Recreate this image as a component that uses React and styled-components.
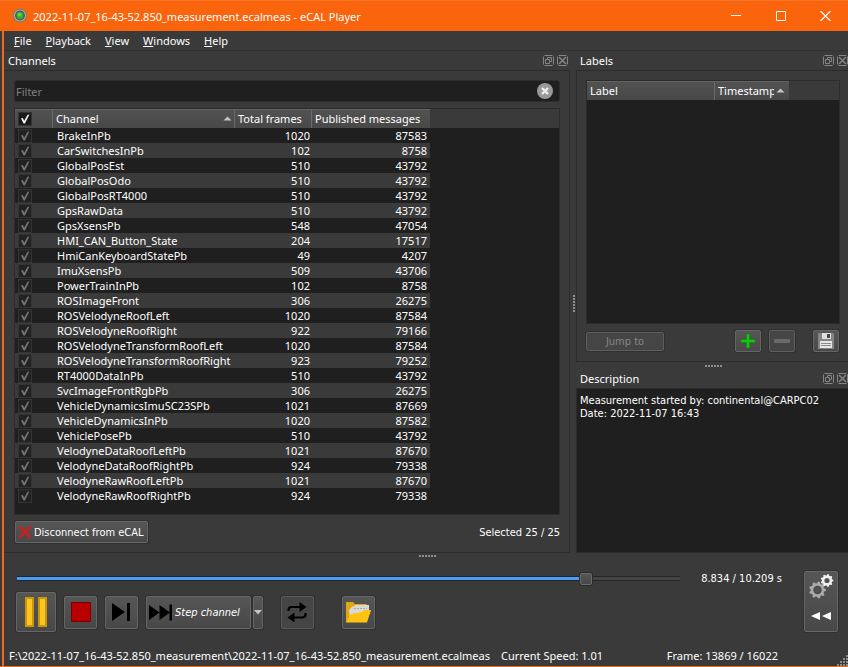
import React, { useState } from 'react';
import styled, { createGlobalStyle, css } from 'styled-components';

const UI = '"Noto Sans", "Open Sans", sans-serif';
const SMALL = '"DejaVu Sans Condensed", "DejaVu Sans", sans-serif';
const PANEL = '#3a3a3a';
const BASE = '#1f1f1f';
const LINE = '#2c2c2c';

const GlobalStyle = createGlobalStyle`
  *, *::before, *::after { box-sizing: border-box; }
  body { margin: 0; background: ${PANEL}; color: #fff; font: 11px/15px ${UI}; }
  button, input { font: inherit; color: inherit; margin: 0; padding: 0; }
  svg { display: block; flex: none; }
`;

const Window = styled.div`
  display: flex;
  flex-direction: column;
  min-height: 100vh;
  background: ${PANEL};
  border-bottom: 1px solid #f0691f;
`;
const TitleBar = styled.header`
  display: flex;
  align-items: center;
  height: 31px;
  padding-left: 12px;
  background: #f9640d;
  border-top: 1px solid #f87526;
`;
const Title = styled.h1`
  flex: 1;
  margin: 0 0 0 5px;
  font-size: 11px;
  font-weight: 400;
  white-space: nowrap;
`;
const CaptionButton = styled.button`
  display: grid;
  place-items: center;
  width: 45px;
  height: 30px;
  border: 0;
  background: none;
`;
const Body = styled.div`
  flex: 1;
  display: flex;
  flex-direction: column;
  margin-left: 2px;
  border-left: 2px solid #f0691f;
`;
const MenuBar = styled.nav`
  display: flex;
  height: 20px;
  padding-left: 3px;
  border-bottom: 1px solid #323232;
`;
const MenuItem = styled.button`
  padding: 0 7px;
  border: 0;
  background: none;
  line-height: 20px;
`;
const Docks = styled.main`
  flex: 1;
  display: flex;
`;
const LeftDock = styled.section`
  flex: 1;
  display: flex;
  flex-direction: column;
  min-width: 0;
`;
const RightColumn = styled.div`
  flex: none;
  width: 272px;
  display: flex;
  flex-direction: column;
`;
const Dock = styled.section`
  display: flex;
  flex-direction: column;
`;
const DescriptionDock = styled(Dock)`
  flex: 1;
`;
const DockTitle = styled.div`
  display: flex;
  align-items: center;
  gap: 3px;
  height: 19px;
  padding: 0 2px 0 4px;
  ${(p) => p.$flush && css`padding-right: 0;`}
`;
const DockName = styled.h2`
  flex: 1;
  margin: 0;
  font-size: 11px;
  font-weight: 400;
`;
const DockButton = styled.button`
  width: 11px;
  height: 11px;
  border: 0;
  background: none;
`;
const Frame = styled.div`
  flex: 1;
  display: flex;
  flex-direction: column;
  border: 1px solid ${LINE};
  padding: 9px;
  ${(p) => p.$left && css`border-left: 0; padding-left: 10px;`}
  ${(p) => p.$right && css`border-right: 0; padding-right: 8px;`}
`;
const VerticalSplit = styled.div`
  display: flex;
  align-items: center;
  justify-content: flex-end;
  width: 6px;
  padding-top: 3px;
`;
const HorizontalSplit = styled.div`
  display: flex;
  align-items: center;
  justify-content: center;
  height: 7px;
  padding-left: 4px;
  ${(p) => p.$low && css`align-items: flex-end; padding-bottom: 1px;`}
`;

const FilterBox = styled.label`
  display: flex;
  align-items: center;
  height: 22px;
  padding: 0 6px 0 1px;
  background: ${BASE};
  border: 1px solid ${LINE};
  border-radius: 3px;
`;
const FilterInput = styled.input`
  flex: 1;
  height: 20px;
  border: 0;
  outline: 0;
  background: none;
  &::placeholder { color: #808080; opacity: 1; }
`;
const ClearButton = styled.button`
  width: 16px;
  height: 16px;
  border: 0;
  background: none;
`;
const TableView = styled.div`
  flex: 1;
  background: ${BASE};
  border: 1px solid ${LINE};
`;
const ChannelView = styled(TableView)`
  margin-top: 6px;
`;
const LabelView = styled(TableView)`
  min-height: 244px;
`;
const HeaderStrip = styled.div`
  height: 19px;
  background: ${PANEL};
`;
const Table = styled.table`
  table-layout: fixed;
  width: ${(p) => p.$width}px;
  border-collapse: separate;
  border-spacing: 0;
`;
const HeadCell = styled.th`
  height: 19px;
  padding: 0 0 0 3px;
  font-weight: 400;
  line-height: 18px;
  text-align: left;
  white-space: nowrap;
  background: linear-gradient(#525252, #484848);
  border-top: 1px solid #626262;
  border-right: 1px solid #6a6a6a;
  &:last-child { border-right: 0; }
`;
const HeadContent = styled.div`
  display: flex;
  align-items: center;
  gap: 2px;
  padding-right: ${(p) => p.$pad}px;
  svg { margin-bottom: 2px; }
`;
const HeadText = styled.span`
  flex: 1;
  min-width: 0;
  overflow: hidden;
`;
const Row = styled.tr`
  background: ${BASE};
  &:nth-child(even) { background: ${PANEL}; }
`;
const Cell = styled.td`
  height: 15px;
  padding: 0 0 0 4px;
  line-height: 15px;
  white-space: nowrap;
  ${(p) => p.$num && css`text-align: right; padding-right: ${p.$num}px;`}
`;
const CheckCell = styled(Cell)`
  padding-left: 3px;
`;
const Check = styled.span`
  display: grid;
  width: 14px;
  height: 14px;
  > * { grid-area: 1 / 1; }
  svg { place-self: center; pointer-events: none; }
`;
const CheckInput = styled.input`
  appearance: none;
  width: 14px;
  height: 14px;
  background: ${(p) => (p.$bright ? '#191919' : '#222')};
  border: 1px solid #343434;
`;
const ToolRow = styled.div`
  display: flex;
  align-items: center;
  gap: 8px;
  height: 22px;
  margin-top: 6px;
  padding-right: 1px;
`;
const SplitRow = styled(ToolRow)`
  justify-content: space-between;
  padding-right: 0;
`;
const Spacer = styled.span`
  flex: 1;
`;
const Small = styled.span`
  font-family: ${SMALL};
  white-space: nowrap;
`;
const Button = styled.button`
  display: flex;
  align-items: center;
  justify-content: center;
  gap: 2px;
  width: ${(p) => (p.$w ? p.$w + 'px' : 'auto')};
  height: ${(p) => p.$h}px;
  border: 1px solid #666;
  border-radius: 2px;
  background: linear-gradient(#565656, #484848);
  box-shadow: 0 0 0 1px #303030;
  font-family: ${SMALL};
  white-space: nowrap;
  ${(p) => p.$flat && css`background: #454545; border-color: #5a5a5a;`}
  &:disabled { color: #858585; border-color: #5e5e5e; background: #454545; }
`;
const DisconnectButton = styled(Button)`
  padding: 0 3px 0 2px;
  margin-left: 1px;
`;
const StepButton = styled(Button)`
  gap: 3px;
  padding: 0 10px 0 2px;
  font-style: italic;
`;
const SaveSlot = styled.div`
  margin-left: 10px;
`;
const Notes = styled.div`
  flex: 1;
  padding: 5px 3px;
  background: ${BASE};
  border: 1px solid ${LINE};
  border-right: 0;
  font-family: ${SMALL};
  line-height: 13px;
`;

const Controls = styled.section`
  display: flex;
  gap: 22px;
  padding: 11px 10px 0 12px;
`;
const Transport = styled.div`
  flex: 1;
`;
const SliderRow = styled.div`
  display: flex;
  align-items: center;
  gap: 21px;
  height: 15px;
  padding-left: 1px;
`;
const Slider = styled.input`
  appearance: none;
  flex: 1;
  height: 13px;
  background:
    linear-gradient(#4a9df5, #4a9df5) left center / ${(p) => p.$fill}% 3px no-repeat,
    linear-gradient(#454545, #454545) center / 100% 3px no-repeat,
    linear-gradient(#262626, #262626) center / 100% 5px no-repeat;
  border-radius: 2px;
  &::-webkit-slider-thumb {
    appearance: none;
    width: 12px;
    height: 12px;
    border: 1px solid #6a6a6a;
    border-radius: 2px;
    background: linear-gradient(#565656, #484848);
    box-shadow: 0 0 0 1px #2c2c2c;
  }
`;
const Buttons = styled.div`
  display: flex;
  align-items: center;
  gap: 8px;
  margin-top: 6px;
`;
const SplitButton = styled.div`
  display: flex;
  gap: 2px;
  margin-right: 10px;
`;
const LoopSlot = styled.div`
  margin-right: 20px;
`;
const SpeedButton = styled(Button)`
  flex-direction: column;
  justify-content: space-between;
  padding: 2px 0 11px;
`;
const StatusBar = styled.footer`
  display: flex;
  align-items: center;
  height: 21px;
  margin-top: 13px;
  padding-left: 5px;
  white-space: nowrap;
`;
const Path = styled.span`
  flex: 0 1 482px;
  overflow: hidden;
`;
const Speed = styled.span`
  flex: 1;
  padding-left: 10px;
`;
const FrameCount = styled.span`
  padding-right: 59px;
`;
const GripSlot = styled.span`
  align-self: flex-end;
`;

const menus = ['File', 'Playback', 'View', 'Windows', 'Help'];

const channels = [
  ['BrakeInPb', 1020, 87583],
  ['CarSwitchesInPb', 102, 8758],
  ['GlobalPosEst', 510, 43792],
  ['GlobalPosOdo', 510, 43792],
  ['GlobalPosRT4000', 510, 43792],
  ['GpsRawData', 510, 43792],
  ['GpsXsensPb', 548, 47054],
  ['HMI_CAN_Button_State', 204, 17517],
  ['HmiCanKeyboardStatePb', 49, 4207],
  ['ImuXsensPb', 509, 43706],
  ['PowerTrainInPb', 102, 8758],
  ['ROSImageFront', 306, 26275],
  ['ROSVelodyneRoofLeft', 1020, 87584],
  ['ROSVelodyneRoofRight', 922, 79166],
  ['ROSVelodyneTransformRoofLeft', 1020, 87584],
  ['ROSVelodyneTransformRoofRight', 923, 79252],
  ['RT4000DataInPb', 510, 43792],
  ['SvcImageFrontRgbPb', 306, 26275],
  ['VehicleDynamicsImuSC23SPb', 1021, 87669],
  ['VehicleDynamicsInPb', 1020, 87582],
  ['VehiclePosePb', 510, 43792],
  ['VelodyneDataRoofLeftPb', 1021, 87670],
  ['VelodyneDataRoofRightPb', 924, 79338],
  ['VelodyneRawRoofLeftPb', 1021, 87670],
  ['VelodyneRawRoofRightPb', 924, 79338],
];

const CheckBox = ({ label, bright }) => (
  <Check>
    <CheckInput type="checkbox" defaultChecked aria-label={label} $bright={bright} />
    <svg width="10" height="10" viewBox="0 0 10 10" fill={bright ? '#f2f2f2' : '#767676'}>
      <path d="M1 4.6 2.8 4 4.2 6.8 7.6.8 9.4.4 4.9 9.4H3.6Z" />
    </svg>
  </Check>
);
const SortArrow = () => (
  <svg width="9" height="5" viewBox="0 0 9 5"><path d="M.5 4.5 4.5.5l4 4Z" fill="#c4c4c4" /></svg>
);
const Dots = ({ vertical }) => (
  <svg width={vertical ? 3 : 18} height={vertical ? 18 : 3}>
    {[0, 3, 6, 9, 12, 15].map((n) => (
      <rect key={n} x={vertical ? 0 : n} y={vertical ? n : 0} width="2" height="2" fill="#8d8d8d" />
    ))}
  </svg>
);
const FloatIcon = () => (
  <svg width="11" height="11" viewBox="0 0 11 11" fill="none" stroke="#858585">
    <path d="M1.5.5h8M1.5 10.5h8M.5 1.5v8M10.5 1.5v8" />
    <path d="M4.5 4V2.5h4v4H7M2.5 4.5h4v4h-4z" />
  </svg>
);
const CrossIcon = () => (
  <svg width="11" height="11" viewBox="0 0 11 11" fill="none" stroke="#858585">
    <path d="M1.5.5h8M1.5 10.5h8M.5 1.5v8M10.5 1.5v8" />
    <path d="m2 2 7 7M9 2 2 9" strokeWidth="1.5" />
  </svg>
);
const DockHeader = ({ name, flush }) => (
  <DockTitle $flush={flush}>
    <DockName>{name}</DockName>
    <DockButton aria-label={`Float ${name}`}><FloatIcon /></DockButton>
    <DockButton aria-label={`Close ${name}`}><CrossIcon /></DockButton>
  </DockTitle>
);
const AppIcon = () => (
  <svg width="16" height="16" viewBox="0 0 16 16">
    <circle cx="8" cy="7.500" r="6.500" fill="#a9b0ac" stroke="#7a7868" />
    <circle cx="8" cy="7.500" r="4.200" fill="#2fb325" stroke="#4b5a52" strokeWidth="1.400" />
    <circle cx="7.500" cy="6.500" r="2" fill="#5bd44c" />
  </svg>
);

const gear = (cx, cy, r, teeth) => {
  const pts = [];
  for (let i = 0; i < teeth * 4; i += 1) {
    const a = ((i - 0.5) / (teeth * 4)) * Math.PI * 2;
    const rad = i % 4 < 2 ? r : r * 0.8;
    pts.push(`${(cx + rad * Math.cos(a)).toFixed(2)},${(cy + rad * Math.sin(a)).toFixed(2)}`);
  }
  return `M${pts.join('L')}Z`;
};
const hole = (cx, cy, r) => `M${cx - r},${cy}a${r},${r} 0 1 0 ${2 * r},0a${r},${r} 0 1 0 ${-2 * r},0Z`;
const GearsIcon = () => (
  <svg width="26" height="26" viewBox="0 0 26 26" fillRule="evenodd">
    <path d={gear(9.5, 16, 8.5, 9) + hole(9.5, 16, 3.6)} fill="#a9a9a9" />
    <path d={hole(9.5, 16, 4.2) + hole(9.5, 16, 2.8)} fill="#4a4a4a" />
    <path d={gear(19, 6.5, 6.4, 9) + hole(19, 6.5, 2.6)} fill="#f1f3f1" />
  </svg>
);

function ChannelTable() {
  return (
    <ChannelView>
      <HeaderStrip>
        <Table $width={415}>
          <colgroup>
            <col width="38" /><col width="182" /><col width="77" /><col width="118" />
          </colgroup>
          <thead>
            <tr>
              <HeadCell><CheckBox label="Select all channels" bright /></HeadCell>
              <HeadCell>
                <HeadContent $pad={2}><HeadText>Channel</HeadText><SortArrow /></HeadContent>
              </HeadCell>
              <HeadCell>Total frames</HeadCell>
              <HeadCell>Published messages</HeadCell>
            </tr>
          </thead>
          <tbody>
            {channels.map(([name, frames, messages]) => (
              <Row key={name}>
                <CheckCell><CheckBox label={name} /></CheckCell>
                <Cell>{name}</Cell>
                <Cell $num={2}>{frames}</Cell>
                <Cell $num={3}>{messages}</Cell>
              </Row>
            ))}
          </tbody>
        </Table>
      </HeaderStrip>
    </ChannelView>
  );
}

function LabelTable() {
  return (
    <LabelView>
      <HeaderStrip>
        <Table $width={202}>
          <colgroup><col width="128" /><col width="74" /></colgroup>
          <thead>
            <tr>
              <HeadCell>Label</HeadCell>
              <HeadCell>
                <HeadContent $pad={4}><HeadText>Timestamp</HeadText><SortArrow /></HeadContent>
              </HeadCell>
            </tr>
          </thead>
        </Table>
      </HeaderStrip>
    </LabelView>
  );
}

export default function App() {
  const [position, setPosition] = useState(8834);
  return (
    <Window>
      <GlobalStyle />
      <TitleBar>
        <AppIcon />
        <Title>2022-11-07_16-43-52.850_measurement.ecalmeas - eCAL Player</Title>
        <CaptionButton aria-label="Minimize">
          <svg width="10" height="10"><path d="M0 4.500h10" stroke="#fff" /></svg>
        </CaptionButton>
        <CaptionButton aria-label="Maximize">
          <svg width="10" height="10"><path d="M.5.5h9v9h-9z" stroke="#fff" fill="none" /></svg>
        </CaptionButton>
        <CaptionButton aria-label="Close">
          <svg width="11" height="10"><path d="m.5 0 10 10M10.500 0l-10 10" stroke="#fff" strokeWidth="1.200" /></svg>
        </CaptionButton>
      </TitleBar>
      <Body>
        <MenuBar>
          {menus.map((m) => (
            <MenuItem key={m}><u>{m[0]}</u>{m.slice(1)}</MenuItem>
          ))}
        </MenuBar>
        <Docks>
          <LeftDock>
            <DockHeader name="Channels" />
            <Frame $left>
              <FilterBox>
                <FilterInput placeholder="Filter" aria-label="Filter" />
                <ClearButton aria-label="Clear filter">
                  <svg width="16" height="16" viewBox="0 0 16 16">
                    <circle cx="8" cy="8" r="8" fill="#999" />
                    <path d="m5 5 6 6M11 5l-6 6" stroke="#eee" strokeWidth="2.400" />
                  </svg>
                </ClearButton>
              </FilterBox>
              <ChannelTable />
              <SplitRow>
                <DisconnectButton $h={22}>
                  <svg width="14" height="14" viewBox="0 0 14 14">
                    <path d="m1.500 1.500 11 11M12.500 1.500l-11 11" stroke="#c32222" strokeWidth="3" />
                  </svg>
                  Disconnect from eCAL
                </DisconnectButton>
                <Small>Selected 25 / 25</Small>
              </SplitRow>
            </Frame>
          </LeftDock>
          <VerticalSplit><Dots vertical /></VerticalSplit>
          <RightColumn>
            <Dock>
              <DockHeader name="Labels" flush />
              <Frame $right>
                <LabelTable />
                <ToolRow>
                  <Button $w={78} $h={19} disabled>Jump to</Button>
                  <Spacer />
                  <Button $w={26} $h={22} aria-label="Add label">
                    <svg width="16" height="16" viewBox="0 0 16 16">
                      <path d="M6.500 1h3v5.500H15v3H9.500V15h-3V9.500H1v-3h5.500Z" fill="#12c80c" stroke="#0b8a0b" strokeWidth=".6" />
                    </svg>
                  </Button>
                  <Button $w={26} $h={22} disabled aria-label="Remove label">
                    <svg width="16" height="4"><rect width="16" height="4" rx="1" fill="#696969" /></svg>
                  </Button>
                  <SaveSlot>
                    <Button $w={26} $h={22} aria-label="Save labels">
                      <svg width="16" height="16" viewBox="0 0 16 16">
                        <path d="M0 0h15l1 1v15H0Z" fill="#858585" />
                        <path d="M4 0h9v6H4Z" fill="#dedede" />
                        <path d="M9 1h3v4H9Z" fill="#4a4a4a" />
                        <path d="M2 8h12v7H2Z" fill="#e6e6e6" />
                        <path d="M3 10.500h10M3 12.500h10" stroke="#8a8a8a" />
                      </svg>
                    </Button>
                  </SaveSlot>
                </ToolRow>
              </Frame>
            </Dock>
            <HorizontalSplit $low><Dots /></HorizontalSplit>
            <DescriptionDock>
              <DockHeader name="Description" flush />
              <Notes>
                Measurement started by: continental@CARPC02<br />
                Date: 2022-11-07 16:43
              </Notes>
            </DescriptionDock>
          </RightColumn>
        </Docks>
        <HorizontalSplit><Dots /></HorizontalSplit>
        <Controls>
          <Transport>
            <SliderRow>
              <Slider
                type="range"
                min="0"
                max="10209"
                value={position}
                onChange={(e) => setPosition(Number(e.target.value))}
                $fill={(position / 10209) * 100}
                aria-label="Playback position"
              />
              <Small>8.834 / 10.209 s</Small>
            </SliderRow>
            <Buttons>
              <Button $w={40} $h={40} aria-label="Pause">
                <svg width="24" height="30" viewBox="0 0 24 30" fill="#fdc51f" stroke="#c99708" strokeWidth="2">
                  <path d="M2 1h7v28H2zM15 1h7v28h-7z" />
                </svg>
              </Button>
              <Button $w={33} $h={33} aria-label="Stop">
                <svg width="20" height="20"><path d="M.5.5h19v19H.5z" fill="#b80000" stroke="#7a0000" /></svg>
              </Button>
              <Button $w={33} $h={33} aria-label="Step forward">
                <svg width="19" height="18"><path d="M0 0 13 9 0 18ZM15 0h3v18h-3Z" /></svg>
              </Button>
              <SplitButton>
                <StepButton $h={33}>
                  <svg width="23" height="17" viewBox="0 0 23 17">
                    <path d="M0 1 10.500 8.500V1L21 8.500 10.500 16V8.500L0 16ZM20.500.5h2.500v16h-2.500Z" />
                  </svg>
                  Step channel
                </StepButton>
                <Button $w={10} $h={33} aria-label="Step options">
                  <svg width="8" height="5"><path d="M0 0h8L4 4.500Z" fill="#c4c4c4" /></svg>
                </Button>
              </SplitButton>
              <LoopSlot>
                <Button $w={33} $h={33} $flat aria-label="Repeat">
                  <svg width="20" height="20" viewBox="0 0 20 20">
                    <path d="M1.500 9V8q0-3 3-3H13M18.500 11v1.500q0 3-3 3H7" fill="none" stroke="#000" strokeWidth="2.200" />
                    <path d="m12.500 0 7 5-7 5ZM7.500 10.500l-7 5 7 5Z" />
                  </svg>
                </Button>
              </LoopSlot>
              <Button $w={33} $h={33} aria-label="Open measurement">
                <svg width="26" height="24" viewBox="0 0 26 24">
                  <path d="M1 2h7l2 2h11.500v5L4 22H1Z" fill="#dfa80b" />
                  <path d="M4 10 7 6.500h2L10 5h14v6L5 20Z" fill="#d8d8d8" />
                  <path d="M9 8.500h13" stroke="#aaa" strokeDasharray="2 1" />
                  <path d="M6 14 17 12l2-2h7L22 22.500H1Z" fill="#ffc310" />
                </svg>
              </Button>
            </Buttons>
          </Transport>
          <SpeedButton $w={34} $h={61} aria-label="Playback settings">
            <GearsIcon />
            <svg width="20" height="8"><path d="M9 0v8L0 4ZM20 0v8l-9-4Z" fill="#fff" /></svg>
          </SpeedButton>
        </Controls>
        <StatusBar>
          <Path>F:\2022-11-07_16-43-52.850_measurement\2022-11-07_16-43-52.850_measurement.ecalmeas</Path>
          <Speed>Current Speed: 1.01</Speed>
          <FrameCount>Frame: 13869 / 16022</FrameCount>
          <GripSlot>
            <svg width="11" height="11" fill="#8a8a8a">
              <path d="M9 0h2v2H9zM6 3h2v2H6zM9 3h2v2H9zM3 6h2v2H3zM6 6h2v2H6zM9 6h2v2H9zM0 9h2v2H0zM3 9h2v2H3zM6 9h2v2H6zM9 9h2v2H9z" />
            </svg>
          </GripSlot>
        </StatusBar>
      </Body>
    </Window>
  );
}
